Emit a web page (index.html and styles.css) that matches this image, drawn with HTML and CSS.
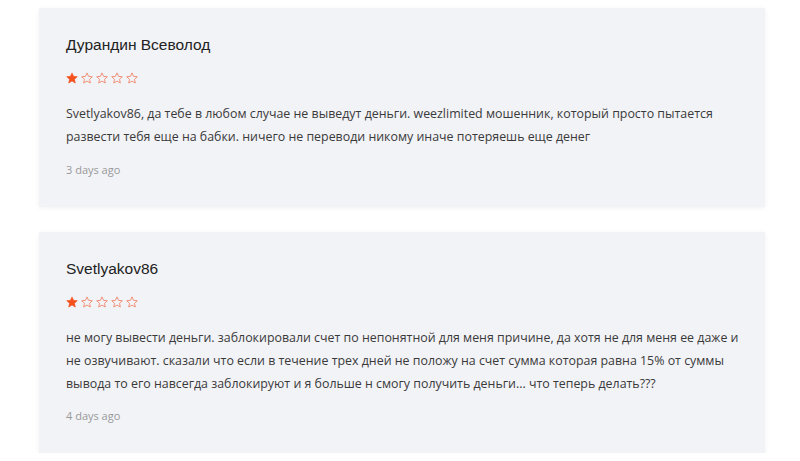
FILE: index.html
```html
<!DOCTYPE html>
<html lang="ru">
<head>
<meta charset="utf-8">
<link rel="stylesheet" href="styles.css">
</head>
<body>
<div class="list">
  <div class="review">
    <div class="name">Дурандин Всеволод</div>
    <div class="stars">
      <svg class="star" viewBox="0 0 24 24"><path class="full" d="M12 1.8l3.1 6.9 7.5.8-5.6 5.1 1.6 7.4L12 18.2 5.4 22l1.6-7.4-5.6-5.1 7.5-.8z"/></svg>
      <svg class="star" viewBox="0 0 24 24"><path class="empty" d="M12 1.8l3.1 6.9 7.5.8-5.6 5.1 1.6 7.4L12 18.2 5.4 22l1.6-7.4-5.6-5.1 7.5-.8z"/></svg>
      <svg class="star" viewBox="0 0 24 24"><path class="empty" d="M12 1.8l3.1 6.9 7.5.8-5.6 5.1 1.6 7.4L12 18.2 5.4 22l1.6-7.4-5.6-5.1 7.5-.8z"/></svg>
      <svg class="star" viewBox="0 0 24 24"><path class="empty" d="M12 1.8l3.1 6.9 7.5.8-5.6 5.1 1.6 7.4L12 18.2 5.4 22l1.6-7.4-5.6-5.1 7.5-.8z"/></svg>
      <svg class="star" viewBox="0 0 24 24"><path class="empty" d="M12 1.8l3.1 6.9 7.5.8-5.6 5.1 1.6 7.4L12 18.2 5.4 22l1.6-7.4-5.6-5.1 7.5-.8z"/></svg>
    </div>
    <p class="text">Svetlyakov86, да тебе в любом случае не выведут деньги. weezlimited мошенник, который просто пытается развести тебя еще на бабки. ничего не переводи никому иначе потеряешь еще денег</p>
    <div class="time">3 days ago</div>
  </div>
  <div class="review">
    <div class="name">Svetlyakov86</div>
    <div class="stars">
      <svg class="star" viewBox="0 0 24 24"><path class="full" d="M12 1.8l3.1 6.9 7.5.8-5.6 5.1 1.6 7.4L12 18.2 5.4 22l1.6-7.4-5.6-5.1 7.5-.8z"/></svg>
      <svg class="star" viewBox="0 0 24 24"><path class="empty" d="M12 1.8l3.1 6.9 7.5.8-5.6 5.1 1.6 7.4L12 18.2 5.4 22l1.6-7.4-5.6-5.1 7.5-.8z"/></svg>
      <svg class="star" viewBox="0 0 24 24"><path class="empty" d="M12 1.8l3.1 6.9 7.5.8-5.6 5.1 1.6 7.4L12 18.2 5.4 22l1.6-7.4-5.6-5.1 7.5-.8z"/></svg>
      <svg class="star" viewBox="0 0 24 24"><path class="empty" d="M12 1.8l3.1 6.9 7.5.8-5.6 5.1 1.6 7.4L12 18.2 5.4 22l1.6-7.4-5.6-5.1 7.5-.8z"/></svg>
      <svg class="star" viewBox="0 0 24 24"><path class="empty" d="M12 1.8l3.1 6.9 7.5.8-5.6 5.1 1.6 7.4L12 18.2 5.4 22l1.6-7.4-5.6-5.1 7.5-.8z"/></svg>
    </div>
    <p class="text">не могу вывести деньги. заблокировали счет по непонятной для меня причине, да хотя не для меня ее даже и не озвучивают. сказали что если в течение трех дней не положу на счет сумма которая равна 15% от суммы вывода то его навсегда заблокируют и я больше н смогу получить деньги... что теперь делать???</p>
    <div class="time">4 days ago</div>
  </div>
</div>
</body>
</html>
```

FILE: styles.css
```css
html, body {
  margin: 0;
  padding: 0;
  background: #ffffff;
}
body {
  font-family: "Open Sans", "Liberation Sans", sans-serif;
  overflow: hidden;
}
.list {
  width: 726px;
  margin-left: 39px;
  padding-top: 8px;
  display: flex;
  flex-direction: column;
  gap: 25px;
}
.review {
  background: #f2f3f7;
  box-shadow: 0 1px 5px rgba(0, 0, 0, 0.06);
  padding: 27px 20px 29px 27px;
  display: flex;
  flex-direction: column;
}
.name {
  font-family: "Liberation Sans", Arial, sans-serif;
  font-size: 15.5px;
  line-height: 20px;
  color: #222;
}
.stars {
  display: flex;
  gap: 3px;
  margin-top: 17px;
  height: 12px;
}
.star {
  width: 12px;
  height: 12px;
}
.star .full {
  fill: #f4511e;
  stroke: #f4511e;
  stroke-width: 1.2;
  stroke-linejoin: round;
}
.star .empty {
  fill: none;
  stroke: #f0876a;
  stroke-width: 1.8;
  stroke-linejoin: round;
}
.text {
  margin: 18px 0 0 0;
  font-size: 12.4px;
  line-height: 23.3px;
  color: #3a3a3a;
}
.time {
  margin-top: 13px;
  font-size: 11px;
  line-height: 16px;
  color: #999;
}
```
